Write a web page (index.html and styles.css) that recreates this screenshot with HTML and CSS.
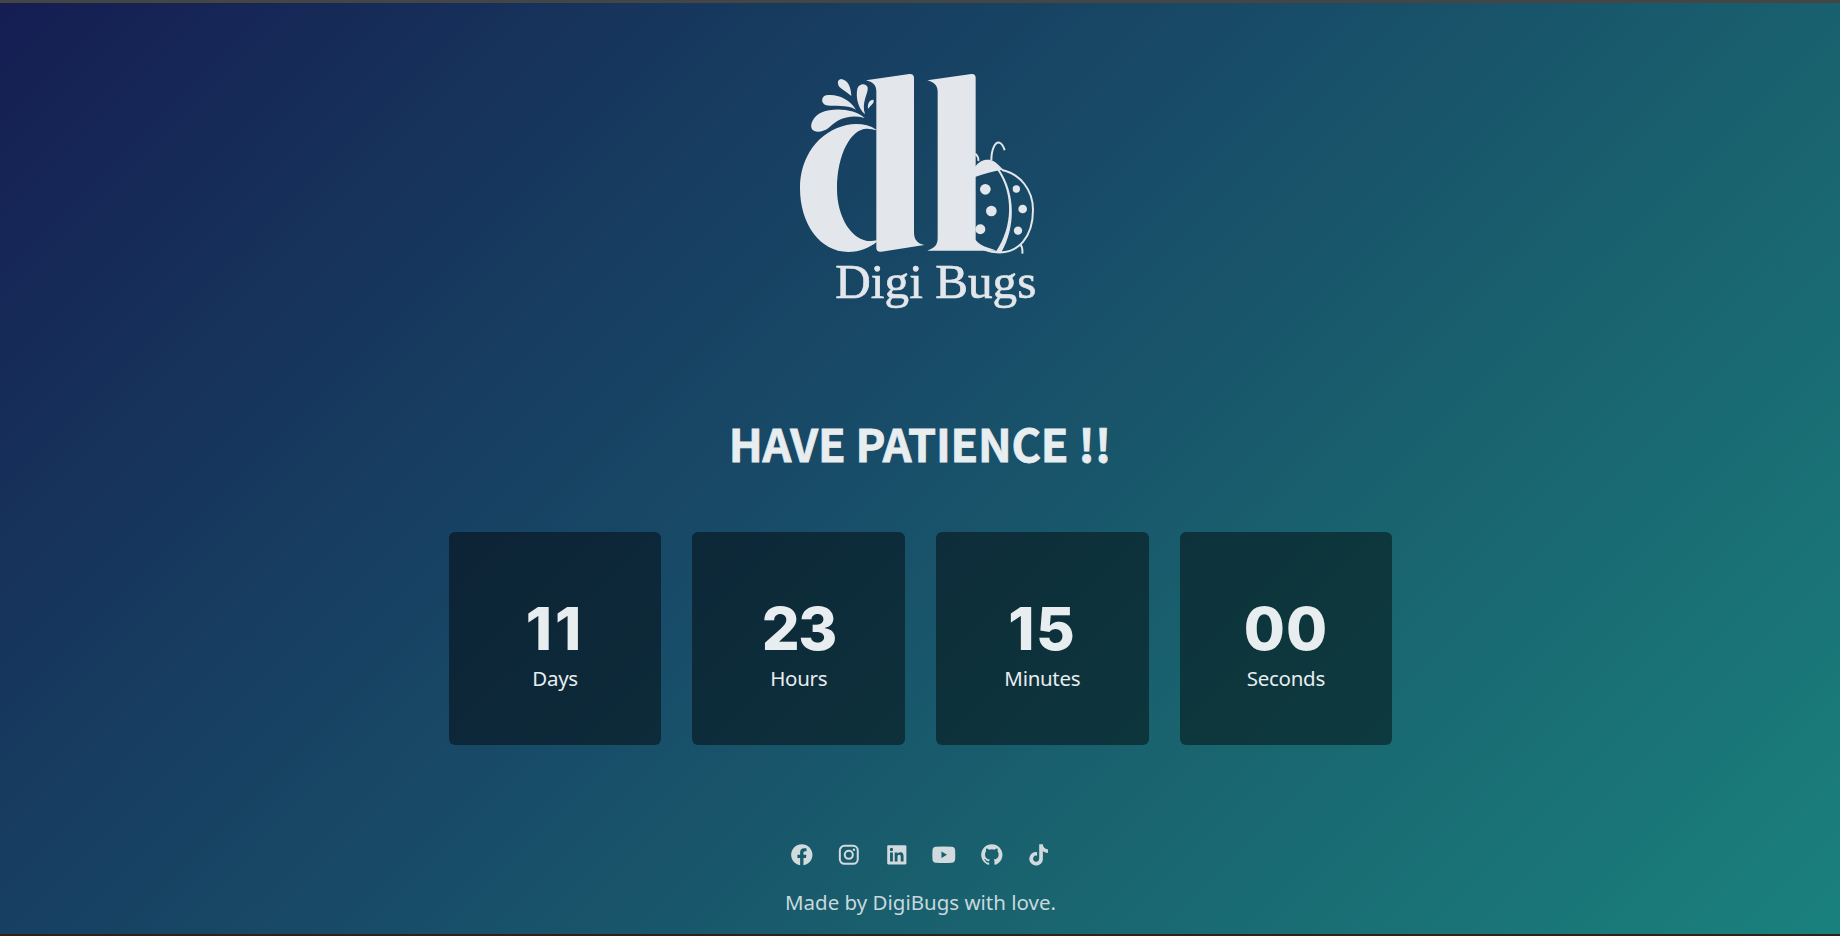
FILE: index.html
```html
<!DOCTYPE html>
<html lang="en">
<head>
<meta charset="utf-8">
<title>Digi Bugs</title>
<link rel="stylesheet" href="styles.css">
</head>
<body>
<main class="page">
  <svg class="logo" viewBox="0 0 840 780" role="img" aria-label="Digi Bugs">
    <g class="mark">
      <path d="M258 61L388 42Q402 41 402 54V516C402 540 412 550 433 555L304 575Q289 577 289 563V94C289 74 278 67 258 61Z"/>
      <path d="M442 61L574 42Q587 41 587 54V540C600 558 625 563 650 572H442C464 564 473 555 473 535V95C473 76 462 67 442 61Z"/>
      <path d="M289 209C265 193 232 189 200 195C115 215 60 290 60 385C60 492 120 576 205 576C240 576 270 562 290 546V541C225 558 171 480 171 386C171 280 215 204 262 206Q276 206 289 211Z"/>
      <path d="M254 174C225 146 160 142 126 157C100 168 88 194 96 208C104 220 132 217 148 202C180 171 215 164 254 174Z"/>
      <path d="M228 149C207 115 168 100 138 106C122 111 123 132 139 136C165 142 198 132 228 149Z"/>
      <path d="M214 108C213 80 203 60 184 57C169 58 172 77 182 84C193 92 202 99 214 108Z"/>
      <path d="M255 163C233 142 227 111 232 86C236 71 257 67 263 82C266 101 243 126 255 163Z"/>
      <path d="M264 147C262 130 268 120 280 119C285 129 273 134 264 147Z"/>
      <path d="M585 320C599 304 606 298 628 299C648 301 658 320 671 329C638 333 612 341 585 351Z"/>
      <circle cx="616" cy="388" r="16"/><circle cx="634" cy="453" r="16"/><circle cx="601" cy="508" r="15"/>
      <circle cx="709" cy="387" r="11"/><circle cx="728" cy="447" r="13"/><circle cx="714" cy="512" r="12.500"/>
      <path d="M652 330C700 400 700 500 647 576L664 577C708 500 706 400 659 330Z"/>
    </g>
    <g class="lines">
      <path d="M634 301C634 267 646 245 658 248Q668 251 674 271M586 281Q597 292 595 303"/>
      <path d="M666 330C721 342 759 390 759 450C759 530 715 582 650 577Q620 575 596 559M720 553C728 559 728 568 727 581"/>
    </g>
    <text class="logo-name" x="166" y="715" textLength="603" lengthAdjust="spacingAndGlyphs">Digi Bugs</text>
  </svg>
  <h1 class="headline">HAVE PATIENCE !!</h1>
  <section class="timer">
    <div class="card"><strong class="number number-days">11</strong><span class="unit">Days</span></div>
    <div class="card"><strong class="number number-hours">23</strong><span class="unit">Hours</span></div>
    <div class="card"><strong class="number number-minutes">15</strong><span class="unit">Minutes</span></div>
    <div class="card"><strong class="number number-seconds">00</strong><span class="unit">Seconds</span></div>
  </section>
  <nav class="social">
    <svg class="icon" viewBox="0 0 24 24"><path d="M12.001 2.002c-5.522 0-9.999 4.477-9.999 9.999 0 4.990 3.656 9.126 8.437 9.879v-6.988h-2.540v-2.891h2.540V9.798c0-2.508 1.493-3.891 3.776-3.891 1.094 0 2.240.195 2.240.195v2.459h-1.264c-1.240 0-1.628.772-1.628 1.563v1.875h2.771l-.443 2.891h-2.328v6.988C18.344 21.129 22 16.992 22 12.001c0-5.522-4.477-9.999-9.999-9.999z"/></svg>
    <svg class="icon" viewBox="0 0 24 24"><rect class="ring" x="3.600" y="3.600" width="16.800" height="16.800" rx="4.300"/><circle class="ring" cx="12" cy="12" r="3.800"/><circle cx="16.800" cy="7.200" r="1.150"/></svg>
    <svg class="icon" viewBox="0 0 24 24"><path d="M20 3H4a1 1 0 0 0-1 1v16a1 1 0 0 0 1 1h16a1 1 0 0 0 1-1V4a1 1 0 0 0-1-1zM8.339 18.337H5.667v-8.590h2.672v8.590zM7.003 8.574a1.548 1.548 0 1 1 0-3.096 1.548 1.548 0 0 1 0 3.096zm11.335 9.763h-2.669V14.160c0-.996-.018-2.277-1.388-2.277-1.390 0-1.601 1.086-1.601 2.207v4.248h-2.667v-8.590h2.560v1.174h.037c.355-.675 1.227-1.387 2.524-1.387 2.704 0 3.203 1.778 3.203 4.092v4.710z"/></svg>
    <svg class="icon" viewBox="0 0 24 24"><path fill-rule="evenodd" d="M4.500 4.500Q12 4 19.500 4.500Q22.400 4.700 22.600 7.600Q22.900 12 22.600 16.400Q22.400 19.300 19.500 19.500Q12 20 4.500 19.500Q1.600 19.300 1.400 16.400Q1.100 12 1.400 7.600Q1.600 4.700 4.500 4.500ZM9.800 9V15L15 12Z"/></svg>
    <svg class="icon" viewBox="0 0 24 24"><path d="M12.026 2c-5.509 0-9.974 4.465-9.974 9.974 0 4.406 2.857 8.145 6.821 9.465.499.090.679-.217.679-.481 0-.237-.008-.865-.011-1.696-2.775.602-3.361-1.338-3.361-1.338-.452-1.152-1.107-1.459-1.107-1.459-.905-.619.069-.605.069-.605 1.002.070 1.527 1.028 1.527 1.028.890 1.524 2.336 1.084 2.902.829.091-.645.351-1.085.635-1.334-2.214-.251-4.542-1.107-4.542-4.930 0-1.087.389-1.979 1.024-2.675-.101-.253-.446-1.268.099-2.640 0 0 .837-.269 2.742 1.021a9.582 9.582 0 0 1 2.496-.336 9.554 9.554 0 0 1 2.496.336c1.906-1.291 2.742-1.021 2.742-1.021.545 1.372.203 2.387.099 2.640.640.696 1.024 1.587 1.024 2.675 0 3.833-2.330 4.675-4.552 4.922.355.308.675.916.675 1.846 0 1.334-.012 2.410-.012 2.737 0 .267.178.577.687.479C19.146 20.115 22 16.379 22 11.974 22 6.465 17.535 2 12.026 2z"/></svg>
    <svg class="icon" viewBox="0 0 24 24"><path d="M19.589 6.686a4.793 4.793 0 0 1-3.770-4.245V2h-3.445v13.672a2.896 2.896 0 0 1-5.201 1.743 2.895 2.895 0 0 1 3.183-4.510v-3.500a6.329 6.329 0 0 0-5.394 10.692 6.330 6.330 0 0 0 10.857-4.424V8.687a8.182 8.182 0 0 0 4.773 1.526V6.790a4.831 4.831 0 0 1-1.003-.104z"/></svg>
  </nav>
  <p class="credit">Made by DigiBugs with love.</p>
</main>
</body>
</html>
```
FILE: styles.css
```css
* { box-sizing: border-box; }
body { margin: 0; }
.page {
  height: 936px;
  display: flex;
  flex-direction: column;
  align-items: center;
  border-top: 3px solid #444545;
  border-bottom: 2px solid #30211a;
  padding-top: 57px;
  background: linear-gradient(135deg, #151d52 0%, #173d60 31%, #184e69 49%, #19616e 67%, #1a817d 100%);
  background-origin: border-box;
  font-family: "Noto Sans", sans-serif;
  color: #e8edf0;
  overflow: hidden;
}
.logo { width: 280px; height: 260px; flex: none; }
.mark { fill: #e3e7eb; }
.lines { fill: none; stroke: #e3e7eb; stroke-width: 6; }
.logo-name { fill: #e3e7eb; stroke: #e3e7eb; stroke-width: 2; font: 147px "Liberation Serif", serif; }
.headline {
  margin: 86px 0 0;
  height: 74px;
  line-height: 74px;
  font-family: "Noto Sans CJK JP", sans-serif;
  font-weight: 700;
  font-size: 45px;
  letter-spacing: -.2px;
  -webkit-text-stroke: .8px #e8edf0;
  white-space: nowrap;
}
.timer { display: flex; gap: 31px; margin: 52px 0 0 1px; }
.card {
  width: 212.6px;
  height: 213px;
  padding-top: 60px;
  border-radius: 6px;
  background: rgba(0, 0, 0, .45);
  display: flex;
  flex-direction: column;
  align-items: center;
}
.number { font-family: Inter, sans-serif; font-size: 59.5px; line-height: 72px; font-weight: 800; }
.number-days { letter-spacing: 3px; }
.number-hours { letter-spacing: -1.5px; }
.number-minutes { letter-spacing: 1.5px; }
.number-seconds { letter-spacing: 1px; }
.unit { font-size: 20.5px; line-height: 28px; letter-spacing: -.3px; }
.social { display: flex; gap: 21.9px; margin: 97px 0 0 1px; }
.icon { width: 25.6px; height: 25.6px; fill: #d1dadd; }
.ring { fill: none; stroke: #d1dadd; stroke-width: 1.9; }
.credit { margin: 19px 0 0 1px; font-size: 20.5px; line-height: 30px; color: #c8d8dc; }
```
